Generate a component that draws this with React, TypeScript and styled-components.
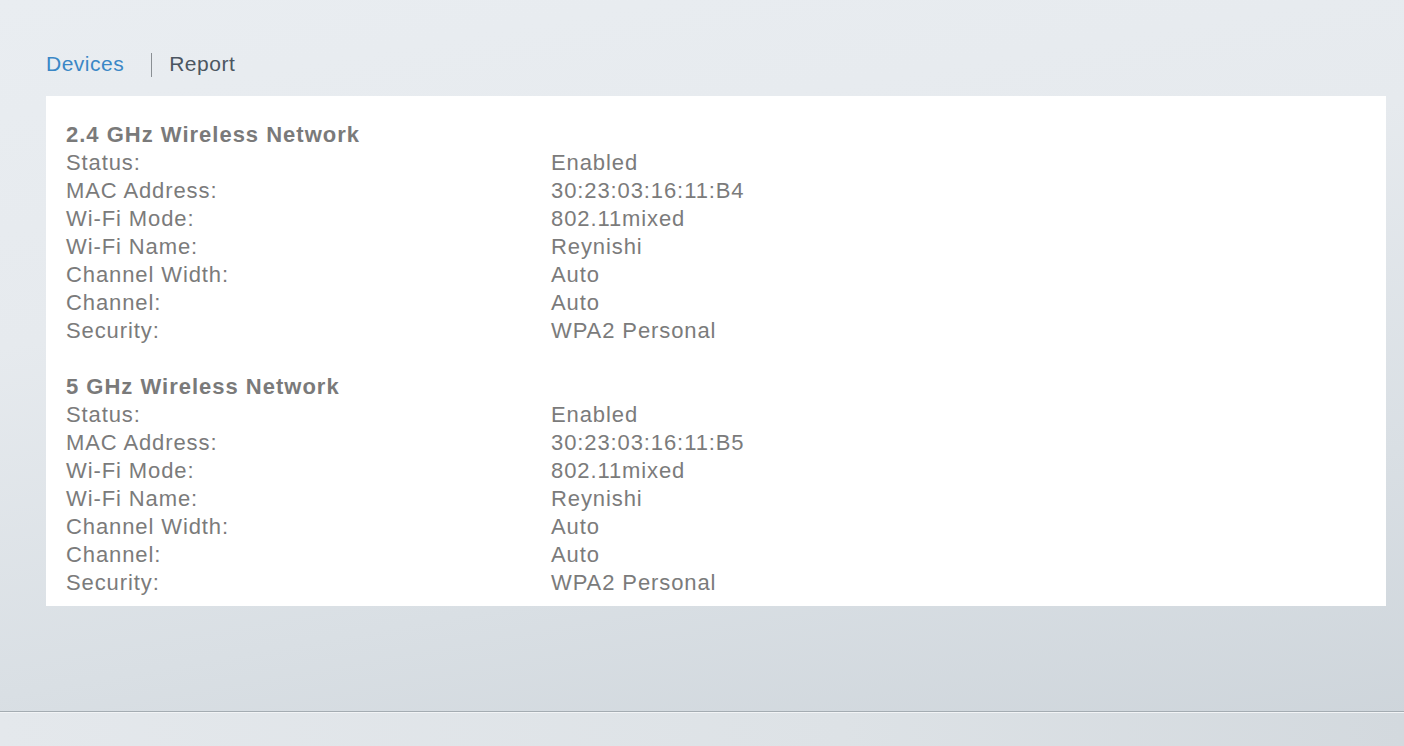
import React from "react";
import styled, { createGlobalStyle } from "styled-components";

const Global = createGlobalStyle`
  html, body { margin: 0; padding: 0; }
  body { font-family: "Liberation Sans", Arial, Helvetica, sans-serif; }
`;

const Page = styled.div`
  min-height: 100vh;
  display: flex;
  flex-direction: column;
  background: linear-gradient(170deg, #e9edf1 0%, #e6eaee 35%, #d9dfe4 70%, #cdd4da 100%);
`;

const Main = styled.main`
  flex: 1;
  display: flex;
  flex-direction: column;
  padding: 52px 18px 0 46px;
  height: 712px;
  box-sizing: border-box;
`;

const Tabs = styled.nav`
  display: flex;
  align-items: center;
  height: 24px;
  margin-bottom: 20px;
`;

const Tab = styled.span<{ $active?: boolean }>`
  font-size: 21px;
  letter-spacing: 0.5px;
  line-height: 24px;
  color: ${(p) => (p.$active ? "#3a87c6" : "#4b5661")};
  cursor: pointer;
`;

const Sep = styled.span`
  width: 1px;
  height: 24px;
  background: #8a8f94;
  margin: 2px 17px 0 27px;
`;

const Panel = styled.section`
  background: #ffffff;
  padding: 25px 20px 9px 20px;
  color: #7b7b7b;
  font-size: 22px;
  letter-spacing: 0.9px;
  line-height: 28px;
`;

const Section = styled.div`
  & + & {
    margin-top: 28px;
  }
`;

const Heading = styled.h3`
  margin: 0;
  font-size: 22px;
  font-weight: bold;
  letter-spacing: 1px;
  line-height: 28px;
  color: #7a7a7a;
`;

const Row = styled.div`
  display: grid;
  grid-template-columns: 485px 1fr;
  height: 28px;
`;

const Footer = styled.footer`
  height: 34px;
  border-top: 1px solid #a4acb2;
  box-shadow: inset 0 1px 0 #f2f4f6;
  background: linear-gradient(90deg, #e4e8ec 0%, #dde2e6 60%, #d3d9de 100%);
`;

type Net = { title: string; rows: [string, string][] };

const nets: Net[] = [
  {
    title: "2.4 GHz Wireless Network",
    rows: [
      ["Status:", "Enabled"],
      ["MAC Address:", "30:23:03:16:11:B4"],
      ["Wi-Fi Mode:", "802.11mixed"],
      ["Wi-Fi Name:", "Reynishi"],
      ["Channel Width:", "Auto"],
      ["Channel:", "Auto"],
      ["Security:", "WPA2 Personal"],
    ],
  },
  {
    title: "5 GHz Wireless Network",
    rows: [
      ["Status:", "Enabled"],
      ["MAC Address:", "30:23:03:16:11:B5"],
      ["Wi-Fi Mode:", "802.11mixed"],
      ["Wi-Fi Name:", "Reynishi"],
      ["Channel Width:", "Auto"],
      ["Channel:", "Auto"],
      ["Security:", "WPA2 Personal"],
    ],
  },
];

export default function App() {
  return (
    <>
      <Global />
      <Page>
        <Main>
          <Tabs>
            <Tab $active>Devices</Tab>
            <Sep />
            <Tab>Report</Tab>
          </Tabs>
          <Panel>
            {nets.map((n) => (
              <Section key={n.title}>
                <Heading>{n.title}</Heading>
                {n.rows.map(([k, v]) => (
                  <Row key={k}>
                    <span>{k}</span>
                    <span>{v}</span>
                  </Row>
                ))}
              </Section>
            ))}
          </Panel>
        </Main>
        <Footer />
      </Page>
    </>
  );
}
